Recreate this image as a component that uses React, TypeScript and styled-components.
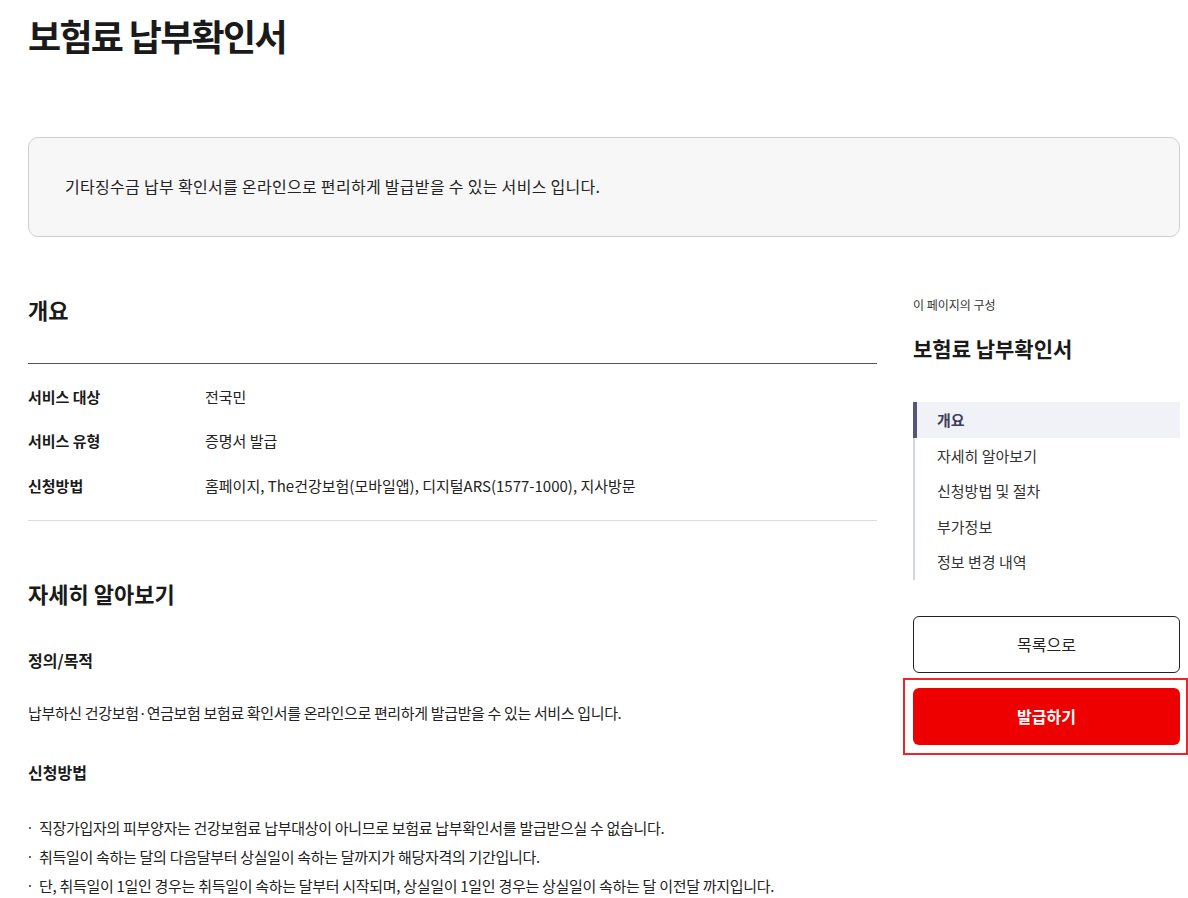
import styled, { createGlobalStyle } from 'styled-components';

const GlobalStyle = createGlobalStyle`
  body {
    margin: 0;
    background: #fff;
    color: #222;
    font-family: "Noto Sans CJK KR", "Noto Sans", sans-serif;
  }
  * {
    box-sizing: border-box;
  }
`;

const overviewRows = [
  { label: '서비스 대상', value: '전국민' },
  { label: '서비스 유형', value: '증명서 발급' },
  { label: '신청방법', value: '홈페이지, The건강보험(모바일앱), 디지털ARS(1577-1000), 지사방문' },
];

const notes = [
  '직장가입자의 피부양자는 건강보험료 납부대상이 아니므로 보험료 납부확인서를 발급받으실 수 없습니다.',
  '취득일이 속하는 달의 다음달부터 상실일이 속하는 달까지가 해당자격의 기간입니다.',
  '단, 취득일이 1일인 경우는 취득일이 속하는 달부터 시작되며, 상실일이 1일인 경우는 상실일이 속하는 달 이전달 까지입니다.',
];

const navItems = ['개요', '자세히 알아보기', '신청방법 및 절차', '부가정보', '정보 변경 내역'];

function App() {
  return (
    <Page>
      <GlobalStyle />
      <Title>보험료 납부확인서</Title>

      <SummaryBox>기타징수금 납부 확인서를 온라인으로 편리하게 발급받을 수 있는 서비스 입니다.</SummaryBox>

      <Body>
        <Main>
          <SectionTitle>개요</SectionTitle>
          <InfoTable>
            {overviewRows.map((row) => (
              <InfoRow key={row.label}>
                <InfoLabel>{row.label}</InfoLabel>
                <InfoValue>{row.value}</InfoValue>
              </InfoRow>
            ))}
          </InfoTable>

          <SectionTitle $spaced>자세히 알아보기</SectionTitle>
          <SubTitle $gap={33}>정의/목적</SubTitle>
          <Paragraph>납부하신 건강보험·연금보험 보험료 확인서를 온라인으로 편리하게 발급받을 수 있는 서비스 입니다.</Paragraph>
          <SubTitle $gap={30}>신청방법</SubTitle>
          <NoteList>
            {notes.map((note) => (
              <NoteItem key={note}>{note}</NoteItem>
            ))}
          </NoteList>
        </Main>

        <Aside>
          <AsideCaption>이 페이지의 구성</AsideCaption>
          <AsideTitle>보험료 납부확인서</AsideTitle>
          <NavList>
            {navItems.map((item, i) => (
              <NavItem key={item} $active={i === 0}>
                {item}
              </NavItem>
            ))}
          </NavList>
          <ButtonGroup>
            <OutlineButton>목록으로</OutlineButton>
            <FocusFrame>
              <PrimaryButton>발급하기</PrimaryButton>
            </FocusFrame>
          </ButtonGroup>
        </Aside>
      </Body>
    </Page>
  );
}

const Page = styled.div`
  width: 1152px;
  margin-left: 28px;
  padding-top: 9px;
`;

const Title = styled.h1`
  margin: 0;
  font-size: 36px;
  line-height: 52px;
  font-weight: 700;
  color: #1a1a1a;
  letter-spacing: -1.7px;
`;

const SummaryBox = styled.div`
  margin-top: 76px;
  height: 100px;
  display: flex;
  align-items: center;
  padding: 0 36px 3px;
  background: #f7f7f7;
  border: 1px solid #cfcfcf;
  border-radius: 10px;
  font-size: 16px;
  color: #222;
  letter-spacing: 0.3px;
`;

const Body = styled.div`
  display: flex;
  gap: 36px;
  margin-top: 52px;
`;

const Main = styled.main`
  width: 849px;
`;

const SectionTitle = styled.h2<{ $spaced?: boolean }>`
  margin: ${(p) => (p.$spaced ? '52px' : '0')} 0 0;
  font-size: 22px;
  line-height: 40px;
  font-weight: 700;
  color: #1a1a1a;
`;

const InfoTable = styled.div`
  margin-top: 34px;
  border-top: 1px solid #555;
  border-bottom: 1px solid #dcdcdc;
  padding: 17px 0 20px;
  display: flex;
  flex-direction: column;
  gap: 14.5px;
`;

const InfoRow = styled.div`
  display: flex;
  align-items: center;
  height: 30px;
  font-size: 15px;
`;

const InfoLabel = styled.div`
  width: 177px;
  font-weight: 700;
  color: #1a1a1a;
`;

const InfoValue = styled.div`
  color: #222;
`;

const SubTitle = styled.h3<{ $gap: number }>`
  margin: ${(p) => p.$gap}px 0 0;
  font-size: 16px;
  line-height: 28px;
  font-weight: 700;
  color: #1a1a1a;
`;

const Paragraph = styled.p`
  margin: 24px 0 0;
  font-size: 15px;
  line-height: 30px;
  color: #222;
  letter-spacing: -0.35px;
`;

const NoteList = styled.ul`
  margin: 27px 0 0;
  padding: 0;
  list-style: none;
  display: flex;
  flex-direction: column;
`;

const NoteItem = styled.li`
  position: relative;
  padding-left: 11px;
  font-size: 15px;
  line-height: 29px;
  color: #222;
  letter-spacing: -0.3px;

  &::before {
    content: '';
    position: absolute;
    left: 1px;
    top: 14px;
    width: 2px;
    height: 2px;
    background: #666;
  }
`;

const Aside = styled.aside`
  width: 267px;
  padding-top: 6px;
`;

const AsideCaption = styled.div`
  font-size: 12px;
  line-height: 20px;
  color: #333;
`;

const AsideTitle = styled.div`
  margin-top: 17px;
  font-size: 21px;
  line-height: 32px;
  font-weight: 700;
  color: #1a1a1a;
`;

const NavList = styled.ul`
  margin: 38px 0 0;
  padding: 0;
  list-style: none;
  border-left: 2px solid #cfd6e4;
`;

const NavItem = styled.li<{ $active?: boolean }>`
  height: 35.5px;
  display: flex;
  align-items: center;
  padding-left: 22px;
  font-size: 15px;
  color: ${(p) => (p.$active ? '#3e3e5e' : '#333')};
  font-weight: ${(p) => (p.$active ? 700 : 400)};
  background: ${(p) => (p.$active ? '#f1f2f7' : 'transparent')};
  box-shadow: ${(p) => (p.$active ? 'inset 2px 0 0 #55557a, -2px 0 0 #55557a' : 'none')};
`;

const ButtonGroup = styled.div`
  margin-top: 36px;
  display: flex;
  flex-direction: column;
  gap: 15px;
`;

const BaseButton = styled.button`
  width: 100%;
  height: 57px;
  border-radius: 6px;
  font-family: inherit;
  font-size: 16px;
  cursor: pointer;
`;

const OutlineButton = styled(BaseButton)`
  background: #fff;
  border: 1px solid #222;
  color: #222;
`;

const FocusFrame = styled.div`
  margin: -10px -8px -10px -10px;
  padding: 8px 6px 8px 8px;
  border: 2px solid #e8262b;
`;

const PrimaryButton = styled(BaseButton)`
  background: #ee0000;
  border: none;
  color: #fff;
  font-weight: 700;
`;

export default App;
